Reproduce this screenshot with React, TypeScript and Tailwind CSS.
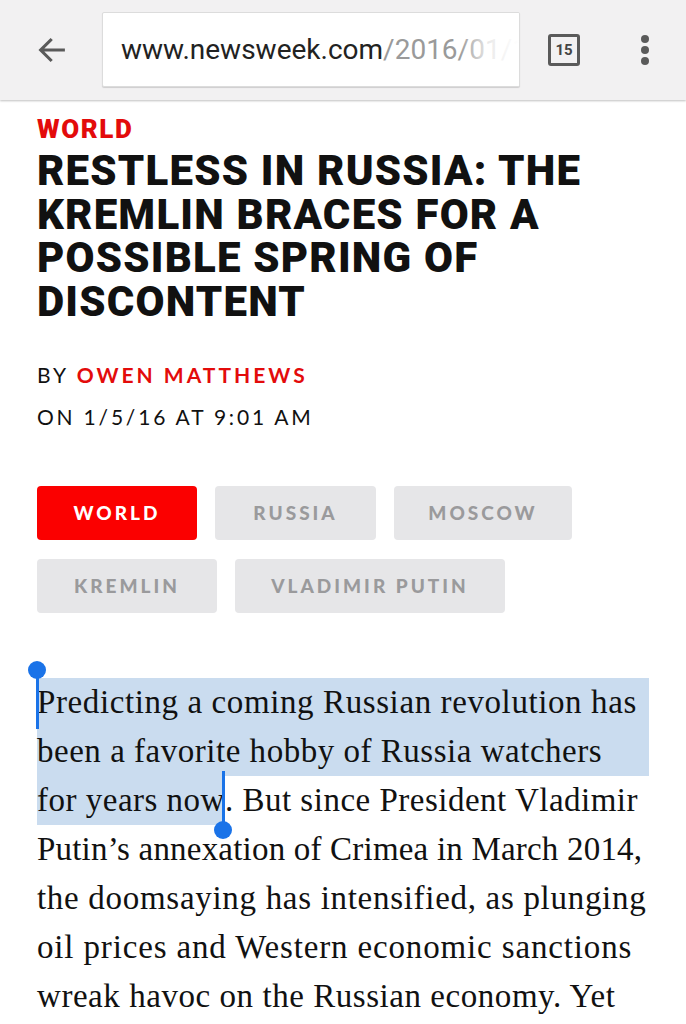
import React from "react";

const tags = [
  ["WORLD", "RUSSIA", "MOSCOW"],
  ["KREMLIN", "VLADIMIR PUTIN"],
];

const tagWidths: Record<string, string> = {
  WORLD: "w-[160px]",
  RUSSIA: "w-[161px]",
  MOSCOW: "w-[178px]",
  KREMLIN: "w-[180px]",
  "VLADIMIR PUTIN": "w-[270px]",
};

const Toolbar = () => (
  <div className="flex h-[100px] items-center bg-[#f2f1f2] shadow-[0_1px_2px_rgba(0,0,0,0.25)]">
    <div className="flex w-[102px] justify-center pl-[2px]">
      <svg width="34" height="34" viewBox="0 0 24 24" fill="none" stroke="#5a5a5a" strokeWidth="2.2" strokeLinecap="square">
        <path d="M20 12H4.5M11 5l-7 7 7 7" />
      </svg>
    </div>
    <div className="relative -mt-[1px] flex h-[75px] w-[418px] items-center overflow-hidden rounded-[2px] border border-[#dcdcdc] bg-white pl-[18px] shadow-[0_1px_1px_rgba(0,0,0,0.15)]">
      <span className="whitespace-nowrap font-['Roboto'] text-[28px] text-[#222]">
        www.newsweek.com<span className="text-[#9a9a9a]">/2016/01/15/restless</span>
      </span>
      <div className="absolute inset-y-0 right-0 w-[60px] bg-gradient-to-r from-transparent via-white/80 to-white" />
    </div>
    <div className="flex w-[88px] justify-center">
      <div className="flex h-[32px] w-[32px] items-center justify-center rounded-[3px] border-[3px] border-[#5a5a5a] font-['Roboto'] text-[15px] font-bold text-[#444]">
        15
      </div>
    </div>
    <div className="flex flex-1 flex-col items-center gap-[3px] pr-[4px]">
      <div className="h-[8px] w-[8px] rounded-full bg-[#5a5a5a]" />
      <div className="h-[8px] w-[8px] rounded-full bg-[#5a5a5a]" />
      <div className="h-[8px] w-[8px] rounded-full bg-[#5a5a5a]" />
    </div>
  </div>
);

const Handle = ({ className, down }: { className: string; down?: boolean }) => (
  <div className={`absolute flex w-[18px] flex-col items-center ${className}`}>
    {down ? (
      <>
        <div className="h-[52px] w-[3px] bg-[#1a73e8]" />
        <div className="-mt-[2px] h-[18px] w-[18px] rounded-full bg-[#1a73e8]" />
      </>
    ) : (
      <>
        <div className="h-[18px] w-[18px] rounded-full bg-[#1a73e8]" />
        <div className="-mt-[2px] h-[52px] w-[3px] bg-[#1a73e8]" />
      </>
    )}
  </div>
);

export default function App() {
  const serif = "font-['Liberation_Serif',serif] text-[33px] leading-[49px] text-[#111] tracking-[0.6px] whitespace-nowrap";
  return (
    <div className="min-h-[1024px] overflow-hidden bg-white">
      <Toolbar />
      <div className="px-[37px]">
        <div className="mt-[13px] font-['Roboto',sans-serif] text-[26px] font-black leading-[32px] tracking-[1.6px] text-[#e30b0b]">
          WORLD
        </div>
        <h1 className="mt-[4px] font-['Roboto',sans-serif] text-[42px] font-black leading-[43.5px] tracking-[1.2px] text-[#111]">
          RESTLESS IN RUSSIA: THE
          <br />
          KREMLIN BRACES FOR A
          <br />
          POSSIBLE SPRING OF
          <br />
          DISCONTENT
        </h1>
        <div className="mt-[31px] font-['Lato',sans-serif] text-[21px] leading-[42px] tracking-[3px] text-[#111]">
          <div>
            BY <span className="font-bold text-[#e30b0b]">OWEN MATTHEWS</span>
          </div>
          <div className="tracking-[2.8px]">ON 1/5/16 AT 9:01 AM</div>
        </div>
        <div className="mt-[48px] flex flex-col gap-[19px]">
          {tags.map((row, i) => (
            <div key={i} className="flex gap-[18px]">
              {row.map((t) => (
                <div
                  key={t}
                  className={`flex h-[54px] items-center justify-center rounded-[4px] font-['Lato',sans-serif] text-[19px] font-black tracking-[3px] ${tagWidths[t]} ${
                    t === "WORLD" ? "bg-[#fb0000] text-white" : "bg-[#e6e6e8] text-[#9a9a9c]"
                  }`}
                >
                  {t}
                </div>
              ))}
            </div>
          ))}
        </div>
        <div className={`relative mt-[65px] ${serif}`}>
          <div className="bg-[#cadcef]">Predicting a coming Russian revolution has</div>
          <div className="bg-[#cadcef] tracking-[0.52px]">been a favorite hobby of Russia watchers</div>
          <div className="tracking-[0.5px]">
            <span className="inline-block bg-[#cadcef]">for years now</span>. But since President Vladimir
          </div>
          <div className="tracking-[0.2px]">Putin’s annexation of Crimea in March 2014,</div>
          <div className="tracking-[0.7px]">the doomsaying has intensified, as plunging</div>
          <div className="tracking-[0.85px]">oil prices and Western economic sanctions</div>
          <div className="tracking-[0.55px]">wreak havoc on the Russian economy. Yet</div>
          <Handle className="-left-[9px] -top-[17px]" />
          <Handle className="left-[177px] top-[93px]" down />
        </div>
      </div>
    </div>
  );
}
